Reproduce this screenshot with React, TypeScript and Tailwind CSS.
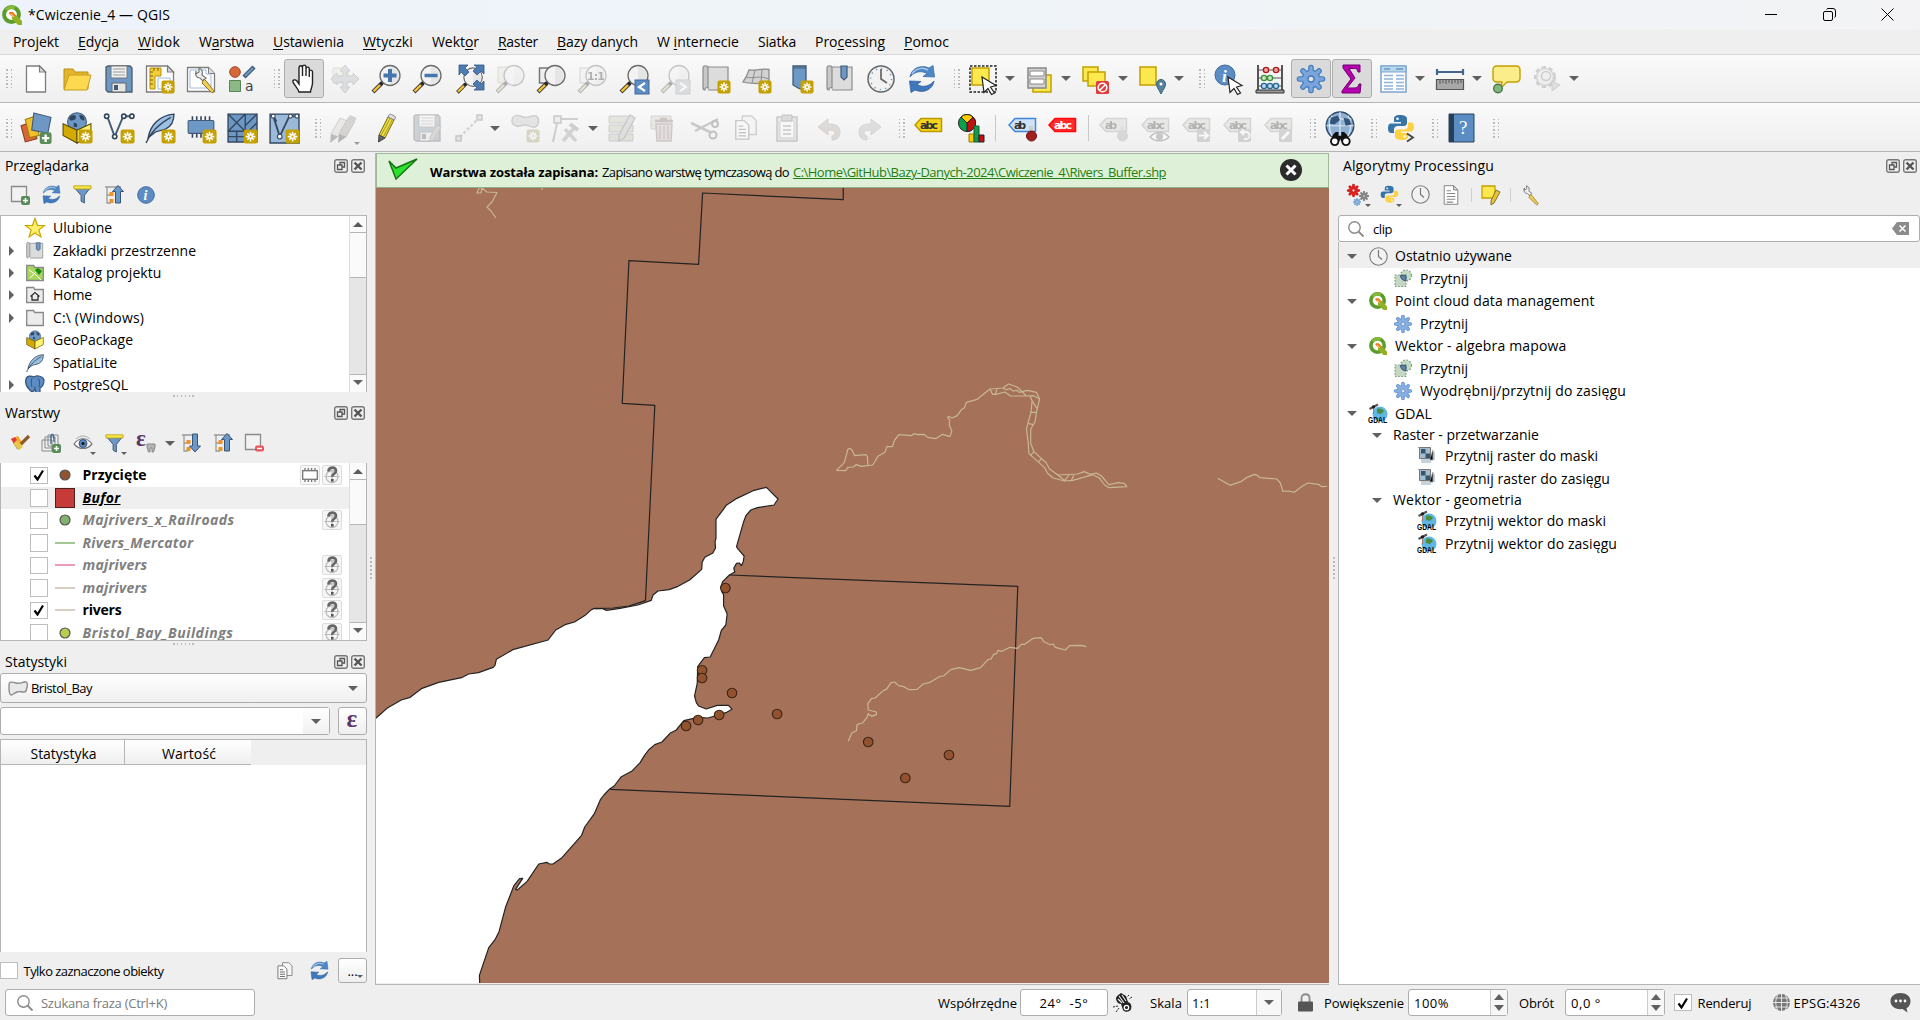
import React, { useLayoutEffect, useRef, useState } from "react";

type Kids = { children?: React.ReactNode };

/* Text that is tracked so that it fills exactly `w` pixels. */
function T({ w, children, className = "" }: Kids & { w: number; className?: string }) {
  const ref = useRef<HTMLSpanElement>(null);
  const [ls, setLs] = useState(0);
  useLayoutEffect(() => {
    const el = ref.current;
    if (!el) return;
    const n = (el.textContent || "").length;
    setLs((w - el.getBoundingClientRect().width) / n);
  }, []);
  return (
    <span ref={ref} className={`inline-block shrink-0 whitespace-pre ${className}`} style={{ letterSpacing: ls }}>
      {children}
    </span>
  );
}

function I({ s = 28, dim = false, vb = "0 0 28 28", children }: Kids & { s?: number; dim?: boolean; vb?: string }) {
  return (
    <svg width={s} height={s} viewBox={vb} className={dim ? "shrink-0 overflow-visible opacity-35 grayscale-[70%]" : "shrink-0 overflow-visible"} fill="none">
      {children}
    </svg>
  );
}

/* ---------- shared icon parts ---------- */
const Badge = () => (
  <g>
    <rect x="15.5" y="15.5" width="13" height="13" rx="2" fill="#c4a000" />
    <path d="M22 17.5v9M17.5 22h9M19 19l6 6M25 19l-6 6" stroke="#fff" strokeWidth="1.5" />
    <circle cx="22" cy="22" r="1" fill="#c4a000" />
  </g>
);
const Lens = ({ f = "#f3f3f3" }: { f?: string }) => (
  <g>
    <path d="M1 27L10 18" stroke="#333" strokeWidth="4" />
    <path d="M1.6 26.4L8 20" stroke="#f7c331" strokeWidth="2.4" />
    <path d="M9 19l3-3" stroke="#222" strokeWidth="3" />
    <circle cx="18" cy="10.5" r="10" fill={f} stroke="#6b6b6b" strokeWidth="1.3" />
    <path d="M18 2a8.5 8.5 0 0 1 0 17z" fill="#dedede" opacity=".7" />
  </g>
);
const Scroll = () => (
  <g stroke="#8c8c8c" strokeWidth="1.2" fill="#dcdcdc">
    <path d="M5 2h21v23H6" />
    <path d="M1 3c0-3 5-3 5 0v20c-2-1-3 0-3 2-2 0-2-1-2-3z" fill="#c8c8c8" />
  </g>
);
const PageIcon = ({ x = 4.5, w = 19 }: { x?: number; w?: number }) => (
  <g>
    <path d={`M${x} 1h${w - 6}l6 6v20h-${w}z`} fill="#fff" stroke="#7d7d7d" strokeWidth="1.3" />
    <path d={`M${x + w - 6} 1v6h6z`} fill="#ddd" stroke="#7d7d7d" strokeWidth="1.2" />
  </g>
);
const QLogo = ({ s = 20 }: { s?: number }) => (
  <I s={s} vb="0 0 20 20">
    <circle cx="9.5" cy="9.5" r="7.4" stroke="#5c9c2c" strokeWidth="4" fill="#fff" />
    <path d="M4 5a7.4 7.4 0 0 1 9-2" stroke="#86b83a" strokeWidth="3.4" />
    <path d="M10 10h4l6 6v4h-4l-6-6z" fill="#93b023" />
    <path d="M7.500 7h3.500l3 3.500v1h-4l-3-3z" fill="#ee7913" />
    <path d="M9 9l3 3" stroke="#f8c28a" strokeWidth="1.2" />
  </I>
);
const Refresh = ({ s = 28 }: { s?: number }) => (
  <I s={s}>
    <path d="M2 12C3 4 12-1 21 3l4-2.500L26.500 12 15 11.500l4-3C14 5.500 7 6 2 12z" fill="#4f87c6" stroke="#3a6ea8" strokeWidth=".8" />
    <path d="M26 16c-1 8-10 13-19 9l-4 2.500L1.500 16 13 16.500l-4 3c5 3 12 2.500 17-3.500z" fill="#4078bd" stroke="#2f5f9b" strokeWidth=".8" />
    <path d="M4 9C8 3 15 2 20 5" stroke="#a8c6e6" strokeWidth="1.500" />
  </I>
);
const Gear = ({ s = 28, c = "#7aa5dc", e = "#3f78bb" }: { s?: number; c?: string; e?: string }) => (
  <I s={s}>
    <g stroke={e} strokeWidth="5.600">
      <path d="M14 2.500v23M2.500 14h23M6 6l16 16M22 6L6 22" strokeLinecap="round" />
    </g>
    <circle cx="14" cy="14" r="9.400" fill={e} />
    <g stroke={c} strokeWidth="3.400">
      <path d="M14 2.500v23M2.500 14h23M6 6l16 16M22 6L6 22" strokeLinecap="round" />
    </g>
    <circle cx="14" cy="14" r="8.200" fill={c} />
    <circle cx="14" cy="14" r="3" fill="#e4e4e4" stroke={e} strokeWidth="1.300" />
  </I>
);
const Clock = ({ s = 28 }: { s?: number }) => (
  <I s={s}>
    <circle cx="14" cy="14" r="13" fill="#f2f2f2" stroke="#666" strokeWidth="1.500" />
    <circle cx="14" cy="14" r="10.500" stroke="#6d97c4" strokeWidth="1.500" strokeDasharray="1.200 4.300" />
    <path d="M14 4v10l6 4" stroke="#666" strokeWidth="1.700" />
  </I>
);
const ClockPlain = ({ s = 19 }: { s?: number }) => (
  <I s={s} vb="0 0 19 19">
    <circle cx="9.500" cy="9.500" r="8.700" fill="#f2f2f2" stroke="#7a7a7a" strokeWidth="1.100" />
    <path d="M9.500 3v6.500l3.500 3" stroke="#777" strokeWidth="1.200" />
  </I>
);
const Python = ({ s = 28, p = false }: { s?: number; p?: boolean }) => (
  <I s={s}>
    <path d="M13 1c-5 0-6 2-6 4v3h7v1.500H4C1.500 9.500 1 12 1 14.500S2 19 4 19h3v-3.500c0-2 1.500-3.500 4-3.500h6c2 0 3-1.500 3-3V5c0-3-3-4-7-4z" fill="#3774a8" />
    <path d="M15 26c5 0 6-2 6-4v-3h-7v-1.500h9c3 0 4-2 4-4.500S26 8.500 24 8.500h-3V12c0 2-1.500 3.500-4 3.500h-6c-2 0-3 1.500-3 3V22c0 3 3 4 7 4z" fill="#ffd040" />
    <circle cx="10.500" cy="4.800" r="1.300" fill="#fff" />
    <circle cx="17.500" cy="22.500" r="1.300" fill="#fff" />
    {p && <path d="M20 19.500l6 4-6 4" stroke="#444" strokeWidth="1.800" />}
  </I>
);
const GlobeBox = ({ s = 30, b = true }: { s?: number; b?: boolean }) => (
  <I s={s}>
    <circle cx="14" cy="8.500" r="8.800" fill="#6d97c4" stroke="#415a75" />
    <path d="M8 3c3-2 5-1 5 1s-2 3-4 3-3-2-1-4zM16 2c3-1 5 2 5 4s-3 1-4-1zM11 9c2 0 4 1 3 4h-3z" fill="#2f4560" />
    <path d="M1 10l13 6v12L1 21z" fill="#d3aa00" stroke="#5c4c00" />
    <path d="M27 10l-13 6v12l13-7z" fill="#fff46e" stroke="#5c4c00" />
    {b && <Badge />}
  </I>
);
const Feather = ({ s = 30, b = true }: { s?: number; b?: boolean }) => (
  <I s={s}>
    <path d="M3 23C5 12 13 2 27 1c0 8-3 12-8 14-4 2-8 1-11 4z" fill="#9cc0e2" stroke="#33475f" strokeWidth="1.300" />
    <path d="M1 28C5 18 13 10 24 4" stroke="#33475f" strokeWidth="1.300" />
    {b && <Badge />}
  </I>
);
const Funnel = ({ s = 20 }: { s?: number }) => (
  <I s={s} vb="0 0 20 20">
    <path d="M1 2h18l-7 9v8l-3.500-2v-6z" fill="#6d97c4" stroke="#415a75" />
    <path d="M1 .8h18v3.400H1z" fill="#f7e54a" stroke="#b79c10" strokeWidth=".8" />
  </I>
);
const Tree = ({ up = false }: { up?: boolean }) => (
  <I s={20} vb="0 0 20 20">
    <path d="M1 2h16M3 2v16h4M3 10h4" stroke="#9a9a9a" strokeWidth="1.300" />
    <path d="M5.500 7h4v4h-4zM5.500 14h4v4h-4z" fill="#f39224" />
    {up ? (
      <path d="M14 .5l5.500 6h-3V18h-5V6.500h-3z" fill="#6d97c4" stroke="#34547a" />
    ) : (
      <path d="M14 19l5.500-6h-3V1h-5v12h-3z" fill="#6d97c4" stroke="#34547a" />
    )}
  </I>
);
const Lupe = ({ s = 16 }: { s?: number }) => (
  <I s={s} vb="0 0 16 16">
    <circle cx="6.500" cy="6.500" r="5.700" stroke="#8a8a8a" strokeWidth="1.400" />
    <path d="M10.500 10.500l5 5" stroke="#8a8a8a" strokeWidth="1.800" />
  </I>
);
const Gdal = () => (
  <svg width="20" height="22" viewBox="0 0 20 22" className="shrink-0 overflow-visible">
    <circle cx="12" cy="11" r="7.500" fill="#5fb6e4" />
    <path d="M9 6c3-1 6 0 7 2l-3 3-4-1z" fill="#4c8c3c" />
    <path d="M1.500 6l8.500-4.500" stroke="#555" strokeWidth="2" />
    <circle cx="5.500" cy="4" r="1.800" fill="#222" />
    <path d="M5.500 6v5" stroke="#a77" />
    <text x="0" y="19.500" textLength="19" lengthAdjust="spacingAndGlyphs" fontSize="9.500" fontWeight="700" fontFamily="Liberation Sans" fill="#000">GDAL</text>
  </svg>
);
const ClipIcon = () => (
  <svg width="18" height="20" viewBox="0 0 18 20" className="shrink-0">
    <circle cx="12" cy="6.500" r="5.500" fill="#c4dbc4" stroke="#74997a" strokeWidth="1.200" strokeDasharray="1.500 1.700" />
    <path d="M1 6h11v11.500H1z" fill="#c4d6c4" stroke="#74997a" strokeWidth="1.200" strokeDasharray="1.500 1.700" />
    <path d="M6.500 6.300H12v5.400c-3.500 0-5.500-2-5.500-5.400z" fill="#5d83ad" stroke="#3b556f" />
  </svg>
);
const RasterClip = () => (
  <svg width="18" height="18" viewBox="0 0 18 18" className="mb-[3px] shrink-0">
    <path d="M3 6h14v8h-4v3H3z" fill="#c6d2dc" />
    <path d="M1.500 1.500h11v11h-11z" fill="#a6bccd" stroke="#777" />
    <path d="M3 3h4.500v4.500H3zM7.500 7.500H12V12H7.500z" fill="#33566f" />
    <path d="M0 1.500h2M15 4v10h-3" stroke="#999" />
  </svg>
);
const CopyIcon = ({ s = 28 }: { s?: number }) => (
  <I s={s}>
    <path d="M10 1h10l5 5v15H10z" fill="#f4f4f4" stroke="#8a8a8a" strokeWidth="1.500" />
    <path d="M3 6h9l5 5v15H3z" fill="#fff" stroke="#777" strokeWidth="1.500" />
    <path d="M6 12h5M6 15.500h8M6 19h8M6 22.500h8" stroke="#666" strokeWidth="1.500" />
  </I>
);
const Eye = () => (
  <I s={20} vb="0 0 20 20">
    <path d="M1 11c5-7 13-7 18 0-5 6-13 6-18 0z" fill="#fff" stroke="#777" strokeWidth="1.200" />
    <path d="M3 6c4-4 10-4 14 0" stroke="#aaa" />
    <circle cx="10" cy="10.500" r="4" fill="#5b8ac0" stroke="#34547a" />
    <circle cx="10" cy="10.500" r="1.600" fill="#111" />
  </I>
);
const Cursor = () => <path d="M13 12l14 8.500-5.500 1.500 4 6-3 1.500-3.500-6-4 4z" fill="#fff" stroke="#222" strokeWidth="1.200" />;
const Tag = ({ c, e, txt = "abc", t = "#333" }: { c: string; e: string; txt?: string; t?: string }) => (
  <g>
    <path d="M1 11l6-6.500h20.500v13H7z" fill={c} stroke={e} strokeWidth="1.500" />
    <text x="6" y="15" textLength={txt.length * 6} fontSize="11" fontWeight="700" fontFamily="DejaVu Sans" fill={t}>{txt}</text>
  </g>
);
const Pencil = () => (
  <g>
    <path d="M16 3l6 3-9 18-6-3z" fill="#f0e03c" stroke="#6e6511" />
    <path d="M18 4.500l-9 17M20.500 5.500l-9 17" stroke="#a39528" />
    <path d="M16 3c.5-2.500 2-3.500 3.500-2.500l3 1.500c1.500 1 1.200 2.500-.5 4z" fill="#ddd" stroke="#888" />
    <path d="M7 21l6 3-6.500 4z" fill="#666" stroke="#444" />
  </g>
);
const Binoc = () => (
  <g>
    <path d="M7 17l3-3h3v4h3v-4h3l3 3 3 7h-9l-1-3-1 3H5z" fill="#111" />
    <circle cx="9" cy="24" r="4" fill="#fff" stroke="#111" strokeWidth="2" />
    <circle cx="21" cy="24" r="4" fill="#fff" stroke="#111" strokeWidth="2" />
  </g>
);
const Disk = () => (
  <g>
    <path d="M3 1h22l2 2v24H3L1 25V2z" fill="#6d97c4" stroke="#4d5a68" strokeWidth="1.300" />
    <path d="M6 1h16v12H6z" fill="#f2f2f2" stroke="#777" />
    <path d="M8 4h12M8 7h12M8 10h12" stroke="#999" />
    <path d="M7 18h14v9H7z" fill="#e6e6e6" stroke="#666" />
    <path d="M9 20h4v5H9z" fill="#415a75" />
  </g>
);
const Wrench = () => (
  <g>
    <path d="M9 6c-1 4 0 7 4 7l3 3 3-3-4-3c1-3 0-6-3-7l0 4-3 2z" fill="#eee" stroke="#777" strokeWidth="1.200" />
    <path d="M17 14l3 3 7 9c0 2-2 2-3 1l-9-9z" fill="#f0cf56" stroke="#8b7420" />
  </g>
);
const Stop = () => (
  <g>
    <rect x="14" y="16" width="13" height="13" rx="1.500" fill="#e33b3b" />
    <circle cx="20.500" cy="22.500" r="4.300" stroke="#fff" strokeWidth="1.600" />
    <path d="M17.500 25.500l6-6" stroke="#fff" strokeWidth="1.600" />
  </g>
);

/* ---------- toolbar primitives ---------- */
const Cell = ({ children, on = false, sub = false }: Kids & { on?: boolean; sub?: boolean }) => (
  <div className="relative flex h-[48px] w-[41.260px] shrink-0 items-center justify-center">
    {on ? <div className="flex h-[39px] w-[40px] items-center justify-center rounded-[3px] border border-[#adadad] bg-[#dadada]">{children}</div> : children}
    {sub && <div className="absolute bottom-[7px] right-[5px] h-0 w-0 border-x-[3px] border-t-[3px] border-x-transparent border-t-[#999]" />}
  </div>
);
const Down = () => <div className="h-0 w-0 border-x-[5px] border-t-[5px] border-x-transparent border-t-[#606060]" />;
const Drop = () => (
  <div className="flex w-[15.100px] shrink-0 items-center pl-[1px]">
    <Down />
  </div>
);
const Dots = () => (
  <div className="grid grid-cols-2 gap-x-[3px] gap-y-[2px]">
    {Array.from({ length: 12 }, (_, i) => (
      <div key={i} className="h-[1.500px] w-[1.500px] bg-[#b9b9b9]" />
    ))}
  </div>
);
const Grip = ({ first = false, narrow = false }: { first?: boolean; narrow?: boolean }) => (
  <div className={first ? "flex w-[15.500px] shrink-0 items-center pl-[6px]" : narrow ? "flex w-[17.200px] shrink-0 items-center justify-center pl-[5px]" : "flex w-[19.900px] shrink-0 items-center justify-end pr-[3px]"}>
    <Dots />
  </div>
);
const Sep = ({ w8 = false }: { w8?: boolean }) => (
  <div className={w8 ? "flex w-[8.600px] shrink-0 justify-center" : "flex w-[11.400px] shrink-0 justify-center"}>
    <div className="h-[26px] w-px bg-[#c8c8c8]" />
  </div>
);

const Toolbar1 = () => (
  <div className="flex h-[49px] shrink-0 items-center border-b border-t border-b-[#b5b5b5] border-t-[#d9d9d9] bg-gradient-to-b from-[#fafafa] to-[#efefef]">
    <Grip first />
    <Cell><I><PageIcon /></I></Cell>
    <Cell>
      <I>
        <path d="M1 24V4h9l2 3h13v17z" fill="#e5b62c" stroke="#b98d18" />
        <path d="M1 25L6 10h22l-4 15z" fill="#fcd94f" stroke="#c79c20" />
      </I>
    </Cell>
    <Cell><I><Disk /></I></Cell>
    <Cell>
      <I>
        <PageIcon x={0.5} w={27} />
        <path d="M4 3h11v8H9v13H4z" fill="#f5cd3c" stroke="#b88f00" />
        <path d="M4 7h3M4 11h3M4 15h3M4 19h3M8 3v3M12 3v3" stroke="#7b6200" />
        <path d="M12 13h12v11H12z" stroke="#9dbce0" />
        <Badge />
      </I>
    </Cell>
    <Cell>
      <I>
        <path d="M.5 2.500h21l6 6v18H.5z" fill="#fff" stroke="#7d7d7d" strokeWidth="1.300" />
        <path d="M21.500 2.500v6h6" fill="#ddd" stroke="#7d7d7d" />
        <path d="M3 5h16v4h5v14H3z" stroke="#9dbce0" />
        <Wrench />
      </I>
    </Cell>
    <Cell>
      <I>
        <circle cx="7" cy="7" r="5.300" fill="#d5673a" stroke="#9c4320" />
        <path d="M16 12L26 2" stroke="#415a75" strokeWidth="4.500" />
        <path d="M17 11l8-8" stroke="#6d97c4" strokeWidth="2" />
        <path d="M1.500 15.500h11v11h-11z" fill="#8cb886" stroke="#57855a" />
        <text x="17" y="25.500" fontSize="14" fontFamily="DejaVu Sans" fill="#444">a</text>
      </I>
    </Cell>
    <Grip />
    <Cell on>
      <I>
        <path d="M9 27c-1-4-5-7-6-10-1-2 2-3 4-1l2 3V3c0-3 3.500-3 3.500 0v8V2c0-2.500 3.500-2.500 3.500 0v9-7c0-2.500 3.300-2.500 3.300 0v8-5c0-2.500 3.200-2.500 3.200 0v11c0 4-2 6-2 9z" fill="#fff" stroke="#222" strokeWidth="1.400" />
      </I>
    </Cell>
    <Cell>
      <I dim>
        <path d="M2 3h15v15H2z" fill="#efe5b0" stroke="#c4b56a" />
        <path d="M14 0l5 6h-3v5h6V8l6 6-6 6v-3h-6v5h3l-5 6-5-6h3v-5H6v3l-6-6 6-6v3h6V6H9z" fill="#aeb8c6" stroke="#7d8ba0" />
      </I>
    </Cell>
    <Cell><I><Lens /><path d="M18 4v13M11.500 10.500h13" stroke="#4676b0" strokeWidth="4" /></I></Cell>
    <Cell><I><Lens /><path d="M11.500 10.500h13" stroke="#4676b0" strokeWidth="3.500" /></I></Cell>
    <Cell>
      <I>
        <g transform="translate(1.500 2.500) scale(.92)"><Lens /></g>
        <g fill="#4d7cb4" stroke="#34547a" strokeWidth=".8">
          <path d="M4 0h9l-3 3 4 4-4 4-4-4-2 3z" /><path d="M29 0v9l-3-3-4 4-4-4 4-4-3-2z" /><path d="M29 25v-9l-3 3-4-4-4 4 4 4-3 2z" />
        </g>
      </I>
    </Cell>
    <Cell><I dim><path d="M2 2h16v16H2z" fill="#efe1a6" stroke="#b8a868" /><Lens /></I></Cell>
    <Cell><I><path d="M2.500 3h12v15h-12z" fill="#eee" stroke="#777" strokeWidth="1.500" /><Lens /></I></Cell>
    <Cell>
      <I dim><path d="M2 3h12v15H2z" fill="#eee" stroke="#999" /><Lens />
        <text x="9" y="15" textLength="18" fontSize="11" fontWeight="700" fontFamily="DejaVu Sans" fill="#333">1:1</text>
      </I>
    </Cell>
    <Cell><I><Lens /><rect x="15" y="15" width="14" height="14" fill="#5b8cc4" stroke="#41689a" /><path d="M25 18l-6 4 6 4" stroke="#fff" strokeWidth="2.200" /></I></Cell>
    <Cell><I dim><Lens /><rect x="15" y="15" width="14" height="14" fill="#aab6c6" stroke="#8592a3" /><path d="M19 18l6 4-6 4" stroke="#fff" strokeWidth="2.200" /></I></Cell>
    <Cell><I><Scroll /><Badge /></I></Cell>
    <Cell>
      <I>
        <path d="M0 17C3 13 5 8 6 5c7 1 13-2 20-.500v17C17 16 10 20 0 17z" fill="#d2d2d2" stroke="#8c8c8c" strokeWidth="1.300" />
        <path d="M3 12c7 2 14-2 23 2M12 5L9 18M19 4l-1 15" stroke="#8c8c8c" /><Badge />
      </I>
    </Cell>
    <Cell><I><path d="M8 1h13v25l-8-3-5-3z" fill="#6d97c4" stroke="#415a75" strokeWidth="1.300" /><path d="M8 3h13" stroke="#415a75" /><Badge /></I></Cell>
    <Cell><I><Scroll /><path d="M15 1h6v11l-3 3-3-3z" fill="#6d97c4" stroke="#415a75" strokeWidth="1.200" /></I></Cell>
    <Cell><Clock /></Cell>
    <Cell><Refresh /></Cell>
    <Grip />
    <Cell><I><path d="M1 1h26v26H1z" stroke="#222" strokeWidth="1.500" strokeDasharray="2.500 1.500" /><path d="M3 3h17v17H3z" fill="#fce94f" stroke="#c4a000" strokeWidth="1.500" /><Cursor /></I></Cell>
    <Drop />
    <Cell><I><path d="M7 10h18v17H7z" fill="#fce94f" stroke="#c4a000" strokeWidth="1.500" /><path d="M2 3h18v20H2z" fill="#d4d4d4" stroke="#888" strokeWidth="1.500" /><path d="M4 6h14v5H4zM4 14h14v5H4z" fill="#fff" stroke="#888" /></I></Cell>
    <Drop />
    <Cell><I><g fill="#fce94f" stroke="#c4a000" strokeWidth="1.500"><path d="M1 2h15v14H1z" /><path d="M6 7h17v14H6z" /></g><Stop /></I></Cell>
    <Drop />
    <Cell><I><path d="M2 2h16v18H2z" fill="#fce94f" stroke="#c4a000" strokeWidth="1.500" /><path d="M23 29c-3-6-4.500-7-4.500-10a4.500 4.500 0 0 1 9 0c0 3-1.500 4-4.500 10z" fill="#55839c" stroke="#3c6276" /><circle cx="23" cy="19" r="1.500" fill="#fff" /></I></Cell>
    <Drop />
    <Grip />
    <Cell><I><circle cx="10" cy="10" r="10" fill="#5b8cc4" stroke="#41689a" /><text x="7" y="16.500" fontSize="17" fontStyle="italic" fontWeight="700" fontFamily="Liberation Serif" fill="#fff">i</text><Cursor /></I></Cell>
    <Cell>
      <I>
        <path d="M2 0v26M26 0v26" stroke="#555" strokeWidth="2" /><path d="M0 25h28v3H0z" fill="#999" stroke="#333" />
        <path d="M2 5h24M2 13h24M2 21h24" stroke="#555" />
        <g strokeWidth="1.400"><g fill="#f4a6a6" stroke="#b01818"><circle cx="10" cy="5" r="2.600" /><circle cx="20" cy="5" r="2.600" /></g><g fill="#c5e8bd" stroke="#3f9040"><circle cx="8" cy="13" r="2.600" /><circle cx="14" cy="13" r="2.600" /></g><g fill="#b5dcf2" stroke="#2c6792"><circle cx="8" cy="21" r="2.600" /><circle cx="14" cy="21" r="2.600" /><circle cx="20" cy="21" r="2.600" /></g></g>
      </I>
    </Cell>
    <Cell on><Gear /></Cell>
    <Cell on><I><path d="M5 0h17v7h-2c-.5-3-1.500-3.500-4-3.500h-5l6 9.500-8 10h7c3.500 0 4-1 5-4h2l-1 9H4v-2l9-12L5 3z" fill="#b800b0" stroke="#700070" /></I></Cell>
    <Cell><I><path d="M1 1h25v26H1z" fill="#fff" stroke="#7aa3cf" strokeWidth="1.500" /><path d="M1 1h25v6H1z" fill="#b4d8ea" stroke="#7aa3cf" /><path d="M4 4h6M16 4h7" stroke="#6d97c4" strokeWidth="1.500" /><path d="M4 10.500h9M16 10.500h8M4 14h9M16 14h8M4 17.500h9M16 17.500h8M4 21h9M16 21h8M4 24h9M16 24h8" stroke="#8fb3da" strokeWidth="1.700" /></I></Cell>
    <Drop />
    <Cell><I><path d="M1 7h26M1 4v6M27 4v6" stroke="#41658f" strokeWidth="2.200" /><path d="M.5 14.500h27v10H.5z" fill="#a8a8a8" stroke="#555" strokeWidth="1.200" /><path d="M4 15v4M7 15v3M10 15v4M13 15v3M16 15v4M19 15v3M22 15v4M25 15v3" stroke="#555" /></I></Cell>
    <Drop />
    <Cell><I><path d="M5 1h19q4 0 4 4v8q0 4-4 4h-9l-6 6 1-6H5q-4 0-4-4V5q0-4 4-4z" fill="#fbee8a" stroke="#c4a000" strokeWidth="1.400" /><circle cx="6" cy="23.500" r="4.300" fill="#7fb77f" stroke="#4c754c" strokeWidth="1.400" /></I></Cell>
    <Cell><I dim><circle cx="11" cy="12" r="9" stroke="#888" strokeWidth="4" strokeDasharray="4 2.500" /><circle cx="11" cy="12" r="8.500" fill="#e4e4e4" stroke="#999" strokeWidth="1.500" /><circle cx="12" cy="11" r="4.500" stroke="#888" strokeWidth="1.500" /><path d="M18 16l8 4-8 6z" fill="#bbb" stroke="#888" /></I></Cell>
    <Drop />
  </div>
);

const Toolbar2 = () => (
  <div className="flex h-[49px] shrink-0 items-center border-b border-b-[#b5b5b5] bg-gradient-to-b from-[#fafafa] to-[#efefef] pt-[2px]">
    <Grip first />
    <Cell>
      <I s={30}>
        <path d="M0 12l8-3 7 15-11 3z" fill="#d5673a" stroke="#8b3c1c" /><path d="M4 6l9-3 4 18-9 2z" fill="#f0c02c" stroke="#a07b08" />
        <path d="M12 0l16 4-3 15-15-3z" fill="#6d97c4" stroke="#415a75" />
        <rect x="17.500" y="18" width="11" height="11" rx="2" fill="#5a8c5a" /><path d="M23 20v7M19.500 23.500h7" stroke="#fff" strokeWidth="2.200" />
      </I>
    </Cell>
    <Cell><GlobeBox /></Cell>
    <Cell><I s={30}><path d="M3 3l7 19L18 3h8" stroke="#415a75" strokeWidth="1.800" /><g fill="#fff" stroke="#2f4358" strokeWidth="1.500"><circle cx="2.500" cy="3" r="2" /><circle cx="10" cy="22" r="2" /><circle cx="18.500" cy="3" r="2" /><circle cx="26" cy="3" r="2" /></g><Badge /></I></Cell>
    <Cell><Feather /></Cell>
    <Cell><I s={30}><path d="M6 3v20M10 3v20M14 3v20M18 3v20M22 3v20" stroke="#33475f" strokeWidth="1.500" /><rect x="2" y="7" width="24" height="12" rx="1" fill="#6d97c4" stroke="#415a75" /><Badge /></I></Cell>
    <Cell><I s={30}><path d="M1 1h27v26H1z" fill="#6d97c4" stroke="#33475f" strokeWidth="1.300" /><path d="M1 17h27M17 1v26M1 1l16 16M17 1L1 17M28 1L17 12M1 22h16M9 17v10M20 17l8-8" stroke="#33475f" strokeWidth="1.300" /><Badge /></I></Cell>
    <Cell><I s={30}><path d="M1 1h27v27H1z" fill="#9bb9d8" stroke="#33475f" strokeWidth="1.300" /><path d="M4 3l6 19 9-19h8M4 3l3 5" stroke="#33475f" strokeWidth="1.700" /><g fill="#fff" stroke="#33475f"><circle cx="4" cy="3" r="1.800" /><circle cx="10" cy="22" r="2.200" /><circle cx="20" cy="3" r="1.800" /><circle cx="26" cy="3" r="1.800" /></g><Badge /></I></Cell>
    <Grip />
    <Cell sub><I dim><g transform="translate(-4 0)"><path d="M13 4l7 3-9 16-7-3z" fill="#d9d0c0" stroke="#888" /><path d="M4 20l7 3-8 6z" fill="#555" /></g><path d="M17 4l7 3-9 16-7-3z" fill="#a8978a" stroke="#777" /><path d="M8 20l7 3-8 6z" fill="#444" /><path d="M17 4l2-3 7 3-2 3z" fill="#b08a8a" /></I></Cell>
    <Cell><I><Pencil /></I></Cell>
    <Cell><I dim><Disk /><path d="M24 11l4 2-7 12-4 2v-4z" fill="#c9a0a0" stroke="#777" /></I></Cell>
    <Cell><I dim><path d="M5 23L23 5" stroke="#999" strokeWidth="2.500" strokeDasharray="3 2" /><path d="M1 22h5v5H1zM22 1h5v5h-5z" fill="#ccc" stroke="#777" strokeWidth="1.500" /></I></Cell>
    <Drop />
    <Cell><I dim><path d="M1 7C1 0 8 1 12 3s8-2 13-1c4 2 3 10-1 11s-6-2-10-2-6 2-9 1-4-3-4-5z" fill="#bfc5c5" stroke="#888" strokeWidth="1.500" /><Badge /></I></Cell>
    <Cell><I dim><path d="M6 5L1 28M6 5h20" stroke="#888" strokeWidth="2" /><path d="M2 2h7v7H2z" fill="#ddd" stroke="#777" strokeWidth="1.500" /><path d="M13 15l11 12M23 13L11 27" stroke="#999" strokeWidth="3.500" /><path d="M18 10l8 6" stroke="#888" strokeWidth="4" /></I></Cell>
    <Drop />
    <Cell><I dim><path d="M1 2h24v7H1zM1 11h24v7H1zM1 20h24v7H1z" fill="#c9c290" stroke="#888" /><path d="M22 1l5 3-11 20-5 3 0-6z" fill="#bbb" stroke="#777" strokeWidth="1.300" /></I></Cell>
    <Cell><I dim><path d="M1 2h20v13H1z" fill="#d5cfa5" stroke="#999" /><path d="M5 7h18M10 5h7" stroke="#a66" strokeWidth="2.500" /><path d="M6 10h16l-1 17H7zM10 12v13M14 12v13M18 12v13" fill="#dcb5b5" stroke="#b07070" strokeWidth="1.500" /></I></Cell>
    <Cell><I dim><path d="M0 9l19 9M4 17L27 5" stroke="#777" strokeWidth="2.500" /><circle cx="22" cy="21" r="3.500" stroke="#666" strokeWidth="2" /><circle cx="24" cy="10" r="3" stroke="#666" strokeWidth="2" /></I></Cell>
    <Cell><I dim s={26}><CopyIcon /></I></Cell>
    <Cell><I dim><path d="M4 3h20v24H4z" fill="#ccc" stroke="#777" strokeWidth="1.500" /><path d="M7 7h14v17H7z" fill="#fff" stroke="#999" /><path d="M9 1h10v6H9z" fill="#aaa" stroke="#666" /><path d="M10 12h8M10 16h8M10 20h8" stroke="#777" strokeWidth="1.500" /></I></Cell>
    <Cell><I dim><path d="M3 13l10-8v5c8 0 12 2 12 8s-4 8-8 8v-4c4-1 5-6-4-6v5z" fill="#c2a68c" stroke="#a8917a" /></I></Cell>
    <Cell><I dim><path d="M25 13L15 5v5c-8 0-12 2-12 8s4 8 8 8v-4c-4-1-5-6 4-6v5z" fill="#a9b8a9" stroke="#8ea08e" /></I></Cell>
    <Grip narrow />
    <Cell><I><Tag c="#f7d51d" e="#b89a00" /></I></Cell>
    <Cell><I><g transform="translate(2 0)"><circle cx="9" cy="9" r="8.500" fill="#0aa04c" stroke="#222" /><path d="M9 9L3 3a8.500 8.500 0 0 1 12 0z" fill="#ffcc00" stroke="#222" /><path d="M9 9l6-6a8.500 8.500 0 0 1-6 14.500z" fill="#c11010" stroke="#222" /><path d="M11 20h5v8h-5z" fill="#ffcc00" stroke="#a07b00" /><path d="M16 12h5v16h-5z" fill="#1a9850" stroke="#0a5f30" /><path d="M21 21h5v7h-5z" fill="#c11010" stroke="#222" /></g></I></Cell>
    <Sep />
    <Cell><I><Tag c="#cfe2f7" e="#3e86dc" txt="ab" /><path d="M23 12v9" stroke="#ccc" strokeWidth="4" /><circle cx="23.500" cy="22" r="5" fill="#a31f1f" stroke="#6b1010" /></I></Cell>
    <Cell><I><g transform="translate(-2 0)"><Tag c="#ff2a2a" e="#ff0a0a" t="#fff" /></g></I></Cell>
    <Sep w8 />
    <Cell><I dim><Tag c="#d5d1b5" e="#999" txt="ab" /><path d="M23 12v9" stroke="#bbb" strokeWidth="4" /><circle cx="23.500" cy="22" r="5" fill="#bba0a0" stroke="#999" /></I></Cell>
    <Cell><I dim><Tag c="#d5d1b5" e="#999" /><path d="M9 23c5-6 14-6 19 0-5 5-14 5-19 0z" fill="#fff" stroke="#666" strokeWidth="1.400" /><circle cx="18.500" cy="22.500" r="3.500" fill="#777" /></I></Cell>
    <Cell><I dim><Tag c="#d5d1b5" e="#999" /><rect x="15" y="15" width="13" height="13" rx="1" fill="#999" /><path d="M17 21.500h8M22 18l4 3.500-4 3.500" stroke="#fff" strokeWidth="2" /></I></Cell>
    <Cell><I dim><Tag c="#d5d1b5" e="#999" /><rect x="15" y="15" width="13" height="13" rx="1" fill="#999" /><path d="M19 18h4a3 3 0 0 1 0 7h-2M21 15.500L18 18l3 3" stroke="#fff" strokeWidth="1.800" /></I></Cell>
    <Cell><I dim><Tag c="#d5d1b5" e="#999" /><rect x="15" y="15" width="13" height="13" rx="1" fill="#999" /><path d="M18 25l7-7" stroke="#fff" strokeWidth="3" /></I></Cell>
    <Grip />
    <Cell><I s={32}><circle cx="14" cy="12" r="12" fill="#8fb0d2" stroke="#2f4d6b" strokeWidth="1.300" /><path d="M4 6h20M2 12h24M14 0v24M7 3c-3 6-3 12 0 18M21 3c3 6 3 12 0 18" stroke="#dce8f5" /><path d="M6 5l6-2 2 4-5 4-4-1zM17 5l5 1 2 5-5 1z" fill="#34547a" /><g transform="translate(2 6) scale(.82)"><Binoc /></g></I></Cell>
    <Grip />
    <Cell><Python p /></Cell>
    <Grip />
    <Cell><I><path d="M1 0h25v28H1z" fill="#5b8cc4" stroke="#2b4763" /><path d="M1 0h5v28H1z" fill="#263f57" /><text x="11" y="20" fontSize="19" fontFamily="Liberation Serif" fill="#fff">?</text></I></Cell>
    <Grip />
  </div>
);

/* ---------- dock widgets ---------- */
const DockButtons = () => (
  <div className="flex gap-[3px]">
    <svg width="14" height="14" viewBox="0 0 14 14" fill="none"><rect x=".7" y=".7" width="12.600" height="12.600" rx="2" stroke="#777" strokeWidth="1.400" /><path d="M3.500 6h4.500v4.500H3.500zM6 6V3.500h4.500V8H8" stroke="#555" strokeWidth="1.300" /></svg>
    <svg width="14" height="14" viewBox="0 0 14 14" fill="none"><rect x=".7" y=".7" width="12.600" height="12.600" rx="2" stroke="#777" strokeWidth="1.400" /><path d="M3.500 3.500l7 7M10.500 3.500l-7 7" stroke="#555" strokeWidth="2.400" /></svg>
  </div>
);
const Slot = ({ children, sub = false }: Kids & { sub?: boolean }) => (
  <div className="relative flex h-[22px] w-[31.500px] shrink-0 items-center justify-center">
    {children}
    {sub && <div className="absolute bottom-[-1px] right-[3px] h-0 w-0 border-x-[3.500px] border-t-[3.500px] border-x-transparent border-t-[#606060]" />}
  </div>
);
const ScrollBtn = ({ up = false }: { up?: boolean }) => (
  <div className={up ? "flex h-[17px] items-center justify-center border-b border-[#b5b5b5] bg-[#fafafa]" : "flex h-[18px] items-center justify-center border-t border-[#b5b5b5] bg-[#fafafa] pb-[2px]"}>
    {up ? <div className="h-0 w-0 border-x-[5px] border-b-[5px] border-x-transparent border-b-[#5a5a5a]" /> : <Down />}
  </div>
);
const Handle = () => (
  <div className="flex h-full items-center justify-center gap-[2.500px]">
    {[0, 1, 2, 3, 4, 5].map((i) => (
      <div key={i} className="h-[2px] w-[1.300px] bg-[#bbb]" />
    ))}
  </div>
);

const browser: { n: string; w: number; a: boolean; i: React.ReactNode }[] = [
  { n: "Ulubione", w: 59, a: false, i: <I s={20} vb="0 0 20 20"><path d="M10 .5l2.500 6.800 7 .2-5.600 4.400 2 7L10 15l-5.900 3.900 2-7L.5 7.500l7-.2z" fill="#fdf06a" stroke="#c9a400" strokeWidth="1.200" /></I> },
  { n: "Zakładki przestrzenne", w: 143, a: true, i: <I s={18}><Scroll /><path d="M16 1h6v10l-3 3-3-3z" fill="#6d97c4" stroke="#415a75" /></I> },
  { n: "Katalog projektu", w: 108.5, a: true, i: <I s={18} vb="0 0 18 18"><path d="M.7 1.500h7l1 2h8.600v13H.7z" fill="#a9d65c" stroke="#888" strokeWidth="1.300" /><path d="M3 6l6 4 6 6M4 14l6-6" stroke="#fff" /><path d="M9 6l3-2 4 3-3 4z" fill="#128c12" /></I> },
  { n: "Home", w: 39, a: true, i: <I s={18} vb="0 0 18 18"><path d="M.7 1.500h7l1 2h8.600v13H.7z" fill="#ececec" stroke="#888" strokeWidth="1.300" /><path d="M4.500 10.500L9 6.500l4.500 4M6 9.500v4.500h6V9.500" stroke="#333" strokeWidth="1.300" /></I> },
  { n: "C:\\ (Windows)", w: 91, a: true, i: <I s={18} vb="0 0 18 18"><path d="M.7 1.500h7l1 2h8.600v13H.7z" fill="#ececec" stroke="#888" strokeWidth="1.300" /></I> },
  { n: "GeoPackage", w: 80, a: false, i: <GlobeBox s={18} b={false} /> },
  { n: "SpatiaLite", w: 64, a: false, i: <Feather s={18} b={false} /> },
  { n: "PostgreSQL", w: 75, a: true, i: <I s={20} vb="0 0 20 20"><path d="M1 4c1-4 6-3 8-2 3-2 9-1 10 3 0 4-2 7-4 8v5c-1 2-4 2-4 0l-1-5-1 3c-2 1-4 0-5-2C2 12 0 8 1 4z" fill="#5b8cc4" stroke="#34547a" strokeWidth="1.200" /><path d="M7 3c-1 3-1 6 0 9M13 3c2 2 2 6 1 9" stroke="#34547a" /></I> },
];

const Browser = () => (
  <div className="flex h-[239px] shrink-0 flex-col">
    <div className="flex h-[25px] items-center justify-between pl-[5px] pr-[2px]">
      <T w={84}>Przeglądarka</T>
      <DockButtons />
    </div>
    <div className="mb-[4px] flex h-[33px] items-center pl-[4px]">
      <Slot><I s={20} vb="0 0 20 20"><path d="M1.500 1.500h15v15h-15z" fill="#f2f2f2" stroke="#8a8a8a" strokeWidth="1.300" /><rect x="11" y="11" width="9" height="9" rx="2" fill="#5a8c5a" /><path d="M15.500 13v5M13 15.500h5" stroke="#fff" strokeWidth="1.500" /></I></Slot>
      <Slot><Refresh s={19} /></Slot>
      <Slot><Funnel s={19} /></Slot>
      <Slot><Tree up /></Slot>
      <Slot><I s={18} vb="0 0 18 18"><circle cx="9" cy="9" r="8.300" fill="#5b8cc4" stroke="#41689a" /><text x="6.500" y="14" fontSize="14" fontStyle="italic" fontWeight="700" fontFamily="Liberation Serif" fill="#fff">i</text></I></Slot>
    </div>
    <div className="flex h-[177px] overflow-hidden border border-b-0 border-[#b5b5b5] bg-white">
      <div className="flex-1 overflow-hidden pt-[1px]">
        {browser.map((r) => (
          <div key={r.n} className="flex h-[22.400px] items-center">
            <div className="flex w-[24px] justify-center pr-[4px]">
              {r.a && <div className="h-0 w-0 border-y-[5px] border-l-[5px] border-y-transparent border-l-[#606060]" />}
            </div>
            <div className="flex w-[20px] justify-center">{r.i}</div>
            <T w={r.w} className="ml-[8px]">{r.n}</T>
          </div>
        ))}
      </div>
      <div className="flex w-[17px] flex-col border-l border-[#ddd] bg-[#fafafa]">
        <ScrollBtn up />
        <div className="h-[44px]" />
        <div className="flex-1 border-t border-[#b5b5b5] bg-[#e6e6e6]" />
        <ScrollBtn />
      </div>
    </div>
  </div>
);

const layers: { n: string; w: number; on?: boolean; sel?: boolean; dot?: string; line?: string; box?: boolean; mem?: boolean; q?: boolean }[] = [
  { n: "Przycięte", w: 64, on: true, dot: "#91522d", mem: true, q: true },
  { n: "Bufor", w: 38, sel: true, box: true },
  { n: "Majrivers_x_Railroads", w: 152, dot: "#7fb36e", q: true },
  { n: "Rivers_Mercator", w: 111, line: "#a5c796" },
  { n: "majrivers", w: 65, line: "#ea9db6", q: true },
  { n: "majrivers", w: 65, line: "#d8cfc0", q: true },
  { n: "rivers", w: 39, on: true, line: "#d8cfc0", q: true },
  { n: "Bristol_Bay_Buildings", w: 151, dot: "#b8cc4e", q: true },
];
const Check = ({ on = false }: { on?: boolean }) => (
  <div className="flex h-[17.500px] w-[17.500px] shrink-0 items-center justify-center border border-[#bdbdbd] bg-white">
    {on && <svg width="12" height="12" viewBox="0 0 12 12" fill="none"><path d="M1.500 6.500L4.500 10.500 10 1.500" stroke="#000" strokeWidth="2.200" /></svg>}
  </div>
);

const Layers = () => (
  <div className="flex h-[242px] shrink-0 flex-col">
    <div className="flex h-[28px] items-center justify-between pl-[5px] pr-[2px]">
      <T w={55}>Warstwy</T>
      <DockButtons />
    </div>
    <div className="mb-[4px] flex h-[32px] items-center pl-[4px]">
      <Slot><I s={20} vb="0 0 20 20"><path d="M1 6l7-3 5 8-5 6z" fill="#f5a623" /><path d="M1 6l4-2 3 5-4 2z" fill="#e23b3b" /><path d="M3 10l4-1 3 5-3 2z" fill="#4a90d9" /><path d="M7 7l6 7-4 3-6-6z" fill="#edc348" /><path d="M11 11l8-8" stroke="#8c5a2b" strokeWidth="3.200" /></I></Slot>
      <Slot><I s={20} vb="0 0 20 20"><path d="M1 7h10v11H1zM4 4h10v11H4zM7 2h10v11H7z" fill="#eee" stroke="#8a8a8a" /><path d="M10 2v9M10 2c3-2 3 3 3 7" stroke="#41689a" strokeWidth="1.400" /><rect x="11" y="11" width="9" height="9" rx="2" fill="#5a8c5a" /><path d="M15.500 13v5M13 15.500h5" stroke="#fff" strokeWidth="1.500" /></I></Slot>
      <Slot sub><Eye /></Slot>
      <Slot sub><Funnel s={19} /></Slot>
      <Slot><I s={20} vb="0 0 20 20"><text x="0" y="13" fontSize="23" fontFamily="Liberation Serif" fontWeight="700" fill="#5c3566">ε</text><path d="M11 11h8v3l-1.500 5h-1.500v-4h-2v4h-1.500L11 14z" fill="#b5b5b5" stroke="#888" /></I></Slot>
      <div className="flex w-[14px] justify-center pl-[2px]"><Down /></div>
      <Slot><Tree /></Slot>
      <Slot><Tree up /></Slot>
      <Slot><I s={20} vb="0 0 20 20"><path d="M1.500 1.500h15v15h-15z" fill="#f2f2f2" stroke="#8a8a8a" strokeWidth="1.300" /><rect x="11" y="12.500" width="9" height="6" rx="2" fill="#e8545b" /><path d="M13 15.500h5" stroke="#fff" strokeWidth="1.500" /></I></Slot>
    </div>
    <div className="flex h-[178px] overflow-hidden border border-t-0 border-[#b5b5b5] bg-white">
      <div className="flex-1 overflow-hidden pt-[1px]">
        {layers.map((l, i) => (
          <div key={i} className={l.sel ? "flex h-[22.500px] items-center bg-[#efefef] pl-[29px]" : "flex h-[22.500px] items-center pl-[29px]"}>
            <Check on={l.on} />
            <div className="ml-[7px] flex w-[20px] justify-center">
              {l.dot && <svg width="12" height="12" viewBox="0 0 12 12"><circle cx="6" cy="6" r="5" fill={l.dot} stroke="#555" strokeWidth="1.200" /></svg>}
              {l.line && <svg width="20" height="4" viewBox="0 0 20 4"><path d="M0 2h20" stroke={l.line} strokeWidth="2" /></svg>}
              {l.box && <div className="h-[20px] w-[20px] border border-[#4a2020] bg-[#c43b3a]" />}
            </div>
            <div className="flex flex-1 items-center pl-[8px]">
              <T w={l.w} className={l.on ? "font-bold text-black" : l.sel ? "font-bold italic text-black underline" : "font-bold italic text-[#808080]"}>{l.n}</T>
            </div>
            {l.mem && (
              <div className="mr-[2px] flex h-[20px] w-[20px] items-center justify-center rounded-[2px] border border-[#ddd] bg-[#f6f6f6]">
                <svg width="16" height="14" viewBox="0 0 16 14" fill="none" stroke="#777" strokeWidth="1.300"><path d="M3 0v14M6.300 0v14M9.600 0v14M13 0v14" /><rect x=".7" y="2.700" width="14.600" height="8.600" fill="#fff" /></svg>
              </div>
            )}
            {l.q && (
              <div className="mr-[7px] flex h-[20px] w-[20px] items-center justify-center rounded-[2px] border border-[#ddd] bg-[#f6f6f6]">
                <svg width="18" height="18" viewBox="0 0 18 18" fill="none"><circle cx="9" cy="10.500" r="6" stroke="#bbb" strokeWidth="1.300" /><path d="M1.500 10.500h15M9 5v12" stroke="#bbb" strokeWidth="1.200" /><path d="M5.500 5.500c0-5 7.500-5 7.500-.8 0 3-3.800 3-3.800 6" stroke="#666" strokeWidth="2.700" /><path d="M8 13h2.600v2.600H8z" fill="#555" /></svg>
              </div>
            )}
          </div>
        ))}
      </div>
      <div className="flex w-[17px] flex-col border-l border-[#ddd] bg-[#fafafa]">
        <ScrollBtn up />
        <div className="h-[44px]" />
        <div className="flex-1 border-t border-[#b5b5b5] bg-[#e6e6e6]" />
        <ScrollBtn />
      </div>
    </div>
  </div>
);

const Statistics = () => (
  <div className="flex flex-1 flex-col">
    <div className="flex h-[26px] shrink-0 items-center justify-between pl-[5px] pr-[2px] pt-[3px]">
      <T w={62}>Statystyki</T>
      <DockButtons />
    </div>
    <div className="flex h-[30px] shrink-0 items-center rounded-[3px] border border-[#adadad] bg-gradient-to-b from-white to-[#efefef] pl-[7px] pr-[8px]">
      <svg width="20" height="15" viewBox="0 0 20 15"><path d="M1 4c0-4 4-3 7-2s5 0 8-1 4 2 3 5 0 5-3 5-4-1-7 0-4 3-6 3-2-6-2-10z" fill="#e8e8e8" stroke="#8c8c8c" strokeWidth="1.400" /></svg>
      <T w={61} className="ml-[3px] text-[13px]">Bristol_Bay</T>
      <div className="ml-auto"><Down /></div>
    </div>
    <div className="mt-[4px] flex h-[28px] shrink-0 justify-between">
      <div className="flex w-[330px] rounded-[3px] border border-[#adadad] bg-white">
        <div className="flex-1" />
        <div className="flex w-[26px] items-center justify-center bg-gradient-to-b from-white to-[#f0f0f0]"><Down /></div>
      </div>
      <div className="flex w-[29px] items-center justify-center rounded-[3px] border border-[#adadad] bg-gradient-to-b from-white to-[#efefef]">
        <T w={12} className="pb-[4px] font-['Liberation_Serif'] text-[25px] font-bold leading-[20px] text-[#5c3566]">ε</T>
      </div>
    </div>
    <div className="mt-[4px] flex h-[213px] shrink-0 flex-col border border-b-0 border-[#b5b5b5] bg-white">
      <div className="flex h-[25px] bg-[#efefef]">
        <div className="flex w-[124px] items-center justify-center border-b border-r border-[#b5b5b5] bg-gradient-to-b from-white to-[#efefef] pl-[2px] pt-[4px]"><T w={66}>Statystyka</T></div>
        <div className="flex w-[126px] items-center justify-center border-b border-[#b5b5b5] bg-gradient-to-b from-white to-[#efefef] pl-[2px] pt-[4px]"><T w={54}>Wartość</T></div>
      </div>
    </div>
    <div className="flex h-[33px] shrink-0 items-center pt-[4px]">
      <Check />
      <T w={140} className="ml-[6px] text-[13px]">Tylko zaznaczone obiekty</T>
      <div className="ml-auto mr-[9px] flex items-center gap-[16px]">
        <CopyIcon s={18} />
        <Refresh s={19} />
      </div>
      <div className="relative flex h-[25px] w-[29px] items-center justify-center rounded-[3px] border border-[#adadad] bg-gradient-to-b from-white to-[#efefef] text-[13px]">
        ...
        <div className="absolute bottom-[4px] right-[3px] h-0 w-0 border-x-[3px] border-t-[3px] border-x-transparent border-t-[#606060]" />
      </div>
    </div>
  </div>
);

/* ---------- map canvas ---------- */
const coast =
  "M13 475L40 443 70 420 90 412 115 386 154 367 205 353 221 342 243 338 276 322 280 316 283 298 320 269 399 240 416 210 437 194 458 186 482 166 496 149 503 145 521 146 530 151 560 145 600 135 630 121 634 105 645 93 670 89 690 79 716 60 743 28 744 7 750-8 768-21 774-36 773-55 775-65 775-122 778-128 790-149 798-164 822-185 858-208 888-218 914-183 905-165 868-157 853-150 842-133 837-115 821-40 825-32 838-12 836 5 832 17 827 9 821 10 815 24 817 36 805 45 790 65 786 80 788 95 792 104 792 137 800 162 797 195 787 211 781 240 762 291 749 293 734 320 733 370 727 408 731 428 736 438 753 447 778 436 803 436 811 448 799 457 772 468 757 474 735 472 703 482 686 510 672 520 654 546 638 554 624 570 615 586 605 608 586 634 563 650 547 678 536 688 524 705 516 719 503 760 481 801 474 826 430 893 410 912 402 912 396 907 378 912 352 964 330 990 326 988 342 955 335 956 322 978 304 1040 289 1115 280 1139 266 1163 245 1246 246 1280";
const borders = [
  "M1060-1140V-1081L745-1101 736-887 580-898 565-470 638-464 617 122 580 138 545 144 505 146",
  "M805 45L1451 79 1433 739 538 688",
];
const rivers = [
  "M158 331L180 308 190 268 195 265 202 271 209 287 240 284 245 290 246 315M158 331L184 332 190 322 205 321 213 314 228 319 260 315 274 289 294 277 299 260 315 260 321 240 333 224 368 227 375 221 386 224 404 223 413 232 436 236 455 223 476 230 481 213 474 195 475 180 469 173 472 169 482 174 496 167 509 148 516 144 522 127 552 118 588 87 624 84 640 72 664 81 690 108 710 107 727 117 718 157 714 186 702 207 702 250 711 275 746 309 754 326 778 345 833 342 852 335 869 343 886 339 900 348 921 374 948 368 965 371 971 380 922 383 909 375 893 353 876 344 820 361 797 363 765 354 749 340 740 322 697 281 695 247 690 206 703 156 706 122 700 108 645 108 630 96 605 103 595 103 588 87",
  "M608 88L602 103M624 84L634 89 645 86 652 93 662 91 670 97 692 91 718 97 727 117M706 122L719 145M701 157h17M694 190l15 4M711 275l-10 12M732 297l-8 8M778 345l20 18M809 345l-12 17M823 345l-7 16",
  "M1226 355L1260 376 1292 364 1308 352 1328 343 1336 346 1344 353 1391 357 1401 369 1408 394 1424 393 1440 397 1462 379 1478 369 1508 373 1517 380 1531 379",
  "M191 1144L201 1119 214 1112 216 1093 231 1089 244 1072 247 1061 257 1069 270 1063 270 1056 247 1050 246 1031 256 1016 266 1014 290 991 298 988 311 968 321 966 332 977 347 980 362 989 384 988 401 972 420 967 448 949 458 948 478 929 502 923 534 931 562 923 582 899 591 897 598 883 606 881 611 871 621 874 644 862 665 865 675 853 685 853 709 835 731 833 739 845 756 854 765 852 771 862 799 870 811 857 845 856 857 860",
];
const pts = [[725.4, 588], [702.1, 670.3], [702.1, 678], [732, 693], [719.1, 715], [698.1, 720], [686.1, 726], [777.1, 714], [868.2, 742], [949, 755], [905.3, 778]];

const MapCanvas = () => (
  <div className="flex w-[954px] flex-col border-b border-l border-[#b5b5b5]">
    <div className="flex h-[35px] shrink-0 items-center border border-[#9fb898] border-b-[#8fae8a] bg-[#dff0d8] pl-[11px] text-[13px]">
      <svg width="30" height="22" viewBox="0 0 30 22" className="mb-[3px]"><path d="M1 3l7 7L29 1 8 21z" fill="#2ee02e" stroke="#157515" strokeWidth="1.500" /></svg>
      <div className="flex pt-[3px]">
        <T w={168} className="ml-[12px] font-bold">Warstwa została zapisana:</T>
        <T w={187} className="ml-[4px]">Zapisano warstwę tymczasową do</T>
        <T w={373} className="ml-[4px] text-[#1f8010] underline">C:\Home\GitHub\Bazy-Danych-2024\Cwiczenie_4\Rivers_Buffer.shp</T>
      </div>
      <svg width="24" height="24" viewBox="0 0 24 24" className="mb-[2px] ml-auto mr-[25px]"><circle cx="12" cy="12" r="11" fill="#2b2b2b" /><path d="M7.500 7.500l9 9M16.500 7.500l-9 9" stroke="#fff" strokeWidth="3" /></svg>
    </div>
    <svg width="953" height="795" viewBox="376 188 953 795" className="block bg-[#a57158]" fill="none" strokeLinejoin="round">
      <g transform="translate(370 560) scale(.44643 .33333)">
        <path d={`${coast}L-5 1280V475z`} fill="#fff" />
        <path d={coast} stroke="#232323" strokeWidth="1.200" vectorEffect="non-scaling-stroke" />
        {borders.map((d) => (
          <path key={d} d={d} stroke="#232323" strokeWidth="1.200" vectorEffect="non-scaling-stroke" />
        ))}
      </g>
      <g transform="translate(780 360) scale(.35714 .33333)">
        {rivers.map((d) => (
          <path key={d} d={d} stroke="#c7b792" strokeWidth="1.200" vectorEffect="non-scaling-stroke" />
        ))}
      </g>
      <path d="M477 193l2-5h3l-1 5zM482 188l5 4 10 .5-5 9.500-5 5 4 4 5 7M542 187v3" stroke="#c7b792" strokeWidth="1.200" />
      {pts.map(([x, y]) => (
        <circle key={`${x}-${y}`} cx={x} cy={y} r="4.800" fill="#91522d" stroke="#3a2416" strokeWidth="1.100" />
      ))}
    </svg>
  </div>
);

/* ---------- processing toolbox ---------- */
type Row = { n: string; w: number; k: "g" | "i" | "s" | "d"; icon?: React.ReactNode };
const rows: Row[] = [
  { n: "Ostatnio używane", w: 117, k: "g", icon: <ClockPlain /> },
  { n: "Przytnij", w: 48, k: "i", icon: <ClipIcon /> },
  { n: "Point cloud data management", w: 199.500, k: "g", icon: <QLogo s={18} /> },
  { n: "Przytnij", w: 48, k: "i", icon: <Gear s={18} c="#86aee0" e="#5e8fca" /> },
  { n: "Wektor - algebra mapowa", w: 171.500, k: "g", icon: <QLogo s={18} /> },
  { n: "Przytnij", w: 48, k: "i", icon: <ClipIcon /> },
  { n: "Wyodrębnij/przytnij do zasięgu", w: 206, k: "i", icon: <Gear s={18} c="#86aee0" e="#5e8fca" /> },
  { n: "GDAL", w: 37, k: "g", icon: <Gdal /> },
  { n: "Raster - przetwarzanie", w: 146, k: "s" },
  { n: "Przytnij raster do maski", w: 153, k: "d", icon: <RasterClip /> },
  { n: "Przytnij raster do zasięgu", w: 165, k: "d", icon: <RasterClip /> },
  { n: "Wektor - geometria", w: 129, k: "s" },
  { n: "Przytnij wektor do maski", w: 161, k: "d", icon: <Gdal /> },
  { n: "Przytnij wektor do zasięgu", w: 172, k: "d", icon: <Gdal /> },
];
const rowClass = {
  g: "flex h-[22.500px] items-center pl-[7px]",
  i: "flex h-[22.500px] items-center pl-[54px]",
  s: "flex h-[20px] items-center pl-[32px]",
  d: "flex h-[22.500px] items-center pl-[78px]",
};
const textClass = { g: "ml-[7px]", i: "ml-[7px]", s: "ml-[10px]", d: "ml-[8px]" };
const VSep = () => <div className="h-[14px] w-px bg-[#cfcfcf]" />;

const Processing = () => (
  <div className="flex flex-1 flex-col">
    <div className="flex h-[25px] shrink-0 items-center justify-between pl-[5px] pr-[3px]">
      <T w={151}>Algorytmy Processingu</T>
      <DockButtons />
    </div>
    <div className="mb-[4px] flex h-[33px] shrink-0 items-center pl-[4px]">
      <Slot sub>
        <div className="relative h-[22px] w-[22px]">
          <div className="absolute left-0 top-0"><Gear s={13} c="#d22" e="#c11" /></div>
          <div className="absolute right-0 top-[7px]"><Gear s={10} c="#888" e="#777" /></div>
          <div className="absolute left-[6px] top-[14px]"><Gear s={8} c="#7aa5d9" e="#7aa5d9" /></div>
        </div>
      </Slot>
      <Slot sub><Python s={19} /></Slot>
      <Slot><ClockPlain /></Slot>
      <div className="flex w-[30px] justify-center pr-[1px]"><I s={20}><PageIcon /><path d="M8 8h6M8 12h12M8 16h12M8 20h12M8 24h9" stroke="#888" strokeWidth="1.500" /></I></div>
      <div className="w-[4px]" /><VSep /><div className="w-[4px]" />
      <Slot><I s={20} vb="0 0 20 20"><path d="M1 1h13v12l-3 0H1z" fill="#fce94f" stroke="#c4a000" strokeWidth="1.300" /><path d="M15 5l4 2-6 11-3 2v-4z" fill="#e8c33c" stroke="#84702a" /></I></Slot>
      <div className="w-[3px]" /><VSep /><div className="w-[5px]" />
      <Slot><I s={20} vb="7 2 24 26"><Wrench /></I></Slot>
    </div>
    <div className="flex h-[27px] shrink-0 items-center rounded-[3px] border-[1.500px] border-[#adadad] bg-white pl-[9px] pr-[10px]">
      <Lupe />
      <T w={19} className="ml-[9px] text-[13px]">clip</T>
      <svg width="17" height="13" viewBox="0 0 17 13" className="ml-auto"><path d="M0 6.500L5 0h12v13H5z" fill="#8c8c8c" /><path d="M7.500 3.500l6 6M13.500 3.500l-6 6" stroke="#fff" strokeWidth="1.500" /></svg>
    </div>
    <div className="flex-1 border-b border-l border-[#b5b5b5] bg-white">
      {rows.map((r, i) => (
        <div key={i} className={i === 0 ? "bg-[#efefef] pt-[3px]" : ""}>
          <div className={rowClass[r.k]}>
            {(r.k === "g" || r.k === "s") && <div className="flex w-[12px] justify-center"><Down /></div>}
            {r.k === "g" && <div className="ml-[10px] flex w-[20px] justify-center">{r.icon}</div>}
            {(r.k === "i" || r.k === "d") && <div className="flex w-[20px] justify-center">{r.icon}</div>}
            <T w={r.w} className={textClass[r.k]}>{r.n}</T>
          </div>
        </div>
      ))}
    </div>
  </div>
);

/* ---------- status bar ---------- */
const Spin = () => (
  <div className="ml-auto flex w-[17px] flex-col items-center justify-center gap-[5px] border-l border-[#ccc] bg-[#f7f7f7]">
    <div className="h-0 w-0 border-x-[5px] border-b-[6px] border-x-transparent border-b-[#606060]" />
    <div className="h-0 w-0 border-x-[5px] border-t-[6px] border-x-transparent border-t-[#606060]" />
  </div>
);
const Status = () => (
  <div className="flex h-[35px] shrink-0 items-center text-[13px]">
    <div className="ml-[5px] flex h-[27px] w-[250px] items-center rounded-[3px] border border-[#adadad] bg-white pl-[11px] text-[#7a7a7a]">
      <Lupe />
      <T w={126} className="ml-[8px]">Szukana fraza (Ctrl+K)</T>
    </div>
    <T w={79} className="ml-[683px]">Współrzędne</T>
    <div className="ml-[3px] flex h-[27px] w-[88px] items-center justify-center rounded-[3px] border border-[#adadad] bg-white"><T w={49}>24°  -5°</T></div>
    <svg width="20" height="20" viewBox="0 0 20 20" className="ml-[5px]" fill="none">
      <path d="M4 3l4-3 5 3 2 6c3 1 4 4 3 7s-6 4-8 1L8 11C5 11 3 8 3 5z" fill="#222" />
      <path d="M6 3l5 7M9 2l4 6M5 6l4 4" stroke="#eee" strokeWidth="1.100" />
      <circle cx="13.500" cy="14.500" r="2.200" stroke="#fff" strokeWidth="1.300" />
      <path d="M16 2l-2 2M19 4l-3 2M0 14l5-1M3 19l3-4" stroke="#222" strokeDasharray="2 1" />
    </svg>
    <T w={32} className="ml-[17px]">Skala</T>
    <div className="ml-[5px] flex h-[27px] w-[95px] items-center rounded-[3px] border border-[#adadad] bg-white pl-[4px]">
      <T w={19}>1:1</T>
      <div className="ml-auto flex h-full w-[25px] items-center justify-center border-l border-[#ccc] bg-[#f7f7f7]"><Down /></div>
    </div>
    <svg width="15" height="19" viewBox="0 0 15 19" className="ml-[16px]" fill="none"><path d="M3.500 9V5c0-5 8-5 8 0v4" stroke="#8a8a8a" strokeWidth="1.800" /><rect y="8.500" width="15" height="10" rx="1" fill="#555" /></svg>
    <T w={80} className="ml-[11px]">Powiększenie</T>
    <div className="ml-[4px] flex h-[27px] w-[100px] rounded-[3px] border border-[#adadad] bg-white pl-[5px]"><div className="self-center"><T w={35}>100%</T></div><Spin /></div>
    <T w={35} className="ml-[11px]">Obrót</T>
    <div className="ml-[11px] flex h-[27px] w-[100px] rounded-[3px] border border-[#adadad] bg-white pl-[5px]"><div className="self-center"><T w={30}>0,0 °</T></div><Spin /></div>
    <div className="ml-[9px] flex items-center"><Check on /></div>
    <T w={54} className="ml-[6px]">Renderuj</T>
    <svg width="19" height="19" viewBox="0 0 19 19" className="ml-[20px]" fill="none"><circle cx="9.500" cy="9.500" r="8.500" fill="#777" /><path d="M1 9.500h17M9.500 1v17M3 5h13M3 14h13M6 1.500c-3 5-3 11 0 16M13 1.500c3 5 3 11 0 16" stroke="#e5e5e5" /></svg>
    <T w={67} className="ml-[3px]">EPSG:4326</T>
    <svg width="21" height="20" viewBox="0 0 21 20" className="ml-[29px]"><path d="M10.500 0C16 0 20.500 3 20.500 8S17 15 16.500 15.500l1 4-5-3.500C5 17 .5 13 .5 8S5 0 10.500 0z" fill="#555" /><circle cx="6" cy="8" r="1.400" fill="#fff" /><circle cx="10.500" cy="8" r="1.400" fill="#fff" /><circle cx="15" cy="8" r="1.400" fill="#fff" /></svg>
  </div>
);

const U = ({ children }: Kids) => <span className="underline underline-offset-2">{children}</span>;
const VHandle = () => (
  <div className="flex flex-col gap-[2px] pb-[2px]">
    {[0, 1, 2, 3, 4, 5].map((i) => (
      <div key={i} className="h-[2px] w-[2px] bg-[#bbb]" />
    ))}
  </div>
);

export default function App() {
  return (
    <div className="flex h-[1020px] w-[1920px] flex-col overflow-hidden bg-[#efefef] font-['Open_Sans','Noto_Sans',sans-serif] text-[14px] leading-[20px] text-black">
      <div className="flex h-[29px] shrink-0 items-center bg-gradient-to-r from-[#eef3fb] via-[#eff4f8] to-[#f3f3f5] pl-[2px]">
        <QLogo s={20} />
        <T w={142} className="ml-[6px]">*Cwiczenie_4 — QGIS</T>
        <div className="ml-auto flex items-center gap-[45px] pr-[26px]">
          <svg width="14" height="14" viewBox="0 0 14 14" stroke="#000" fill="none"><path d="M1 6.500h12" /></svg>
          <svg width="13" height="13" viewBox="0 0 13 13" stroke="#000" fill="none"><rect x=".5" y="3.500" width="9" height="9" rx="1.500" /><path d="M3.500 1.500Q4 .5 5 .5h5q2.500 0 2.500 2.500v5q0 1-1 1.500" /></svg>
          <svg width="13" height="13" viewBox="0 0 13 13" stroke="#000" fill="none"><path d="M.5.5l12 12M12.500.5l-12 12" /></svg>
        </div>
      </div>
      <div className="flex h-[25px] shrink-0 items-center gap-[19px] pl-[13px]">
        <T w={46}>Pro<U>j</U>ekt</T>
        <T w={41}><U>E</U>dycja</T>
        <T w={42}><U>W</U>idok</T>
        <T w={55}>W<U>a</U>rstwa</T>
        <T w={71}><U>U</U>stawienia</T>
        <T w={50}><U>W</U>tyczki</T>
        <T w={47}>Wekt<U>o</U>r</T>
        <T w={40}><U>R</U>aster</T>
        <T w={81}><U>B</U>azy danych</T>
        <T w={82}>W <U>i</U>nternecie</T>
        <T w={38}>Siatka</T>
        <T w={70}>Pro<U>c</U>essing</T>
        <T w={45}><U>P</U>omoc</T>
      </div>
      <Toolbar1 />
      <Toolbar2 />
      <div className="flex h-[833px] shrink-0 pt-[1px]">
        <div className="flex w-[367px] flex-col">
          <Browser />
          <div className="h-[7px] shrink-0"><Handle /></div>
          <Layers />
          <div className="h-[6px] shrink-0"><Handle /></div>
          <Statistics />
        </div>
        <div className="flex w-[8px] items-center justify-center"><VHandle /></div>
        <MapCanvas />
        <div className="flex w-[9px] items-center justify-center"><VHandle /></div>
        <Processing />
      </div>
      <Status />
    </div>
  );
}
